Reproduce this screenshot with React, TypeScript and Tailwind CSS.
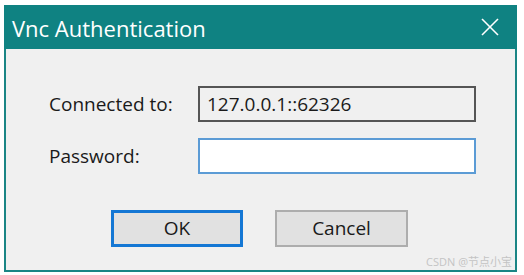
import React from 'react';

const font = { fontFamily: '"Open Sans", "Noto Sans CJK SC", sans-serif' };

function CloseIcon() {
  return (
    <svg width="20" height="20" viewBox="0 0 20 20" className="block">
      <line x1="2" y1="2" x2="18" y2="18" stroke="#ffffff" strokeWidth="1.6" />
      <line x1="18" y1="2" x2="2" y2="18" stroke="#ffffff" strokeWidth="1.6" />
    </svg>
  );
}

export default function App() {
  return (
    <div className="w-[524px] h-[275px] bg-white pl-[4px] pt-[5px] relative" style={font}>
      <div className="w-[513px] h-[267px] flex flex-col border-2 border-t-0 border-[#1a8585] bg-[#f0f0f0]">
        {/* Title bar */}
        <div className="h-[44px] bg-[#0f8282] flex items-center justify-between pl-[8px] pr-[17px] -mx-[2px]">
          <span className="text-white text-[22px] leading-none pt-[1px]">Vnc Authentication</span>
          <CloseIcon />
        </div>

        {/* Fields */}
        <div className="pt-[37px] pl-[43px] flex flex-col gap-[16px]">
          <div className="flex items-center">
            <span className="w-[149px] text-[19px] text-[#1a1a1a]">Connected to:</span>
            <div className="w-[278px] h-[36px] border-2 border-[#555555] bg-[#f0f0f0] flex items-center pl-[7px] text-[19px] text-[#1a1a1a]">
              127.0.0.1::62326
            </div>
          </div>
          <div className="flex items-center">
            <span className="w-[149px] text-[19px] text-[#1a1a1a]">Password:</span>
            <div className="w-[278px] h-[36px] border-2 border-[#5b9bd5] bg-white" />
          </div>
        </div>

        {/* Buttons */}
        <div className="pt-[36px] flex justify-center gap-[32px] pr-[2px]">
          <button className="w-[132px] h-[37px] border-[3px] border-[#1477d4] bg-[#e1e1e1] text-[19px] text-[#1a1a1a]">
            OK
          </button>
          <button className="w-[133px] h-[37px] border-2 border-[#adadad] bg-[#e1e1e1] text-[19px] text-[#1a1a1a]">
            Cancel
          </button>
        </div>
      </div>
      <span className="absolute right-[12px] bottom-[8px] text-[11px] text-[#c4c4c4] leading-none">CSDN @节点小宝</span>
    </div>
  );
}
